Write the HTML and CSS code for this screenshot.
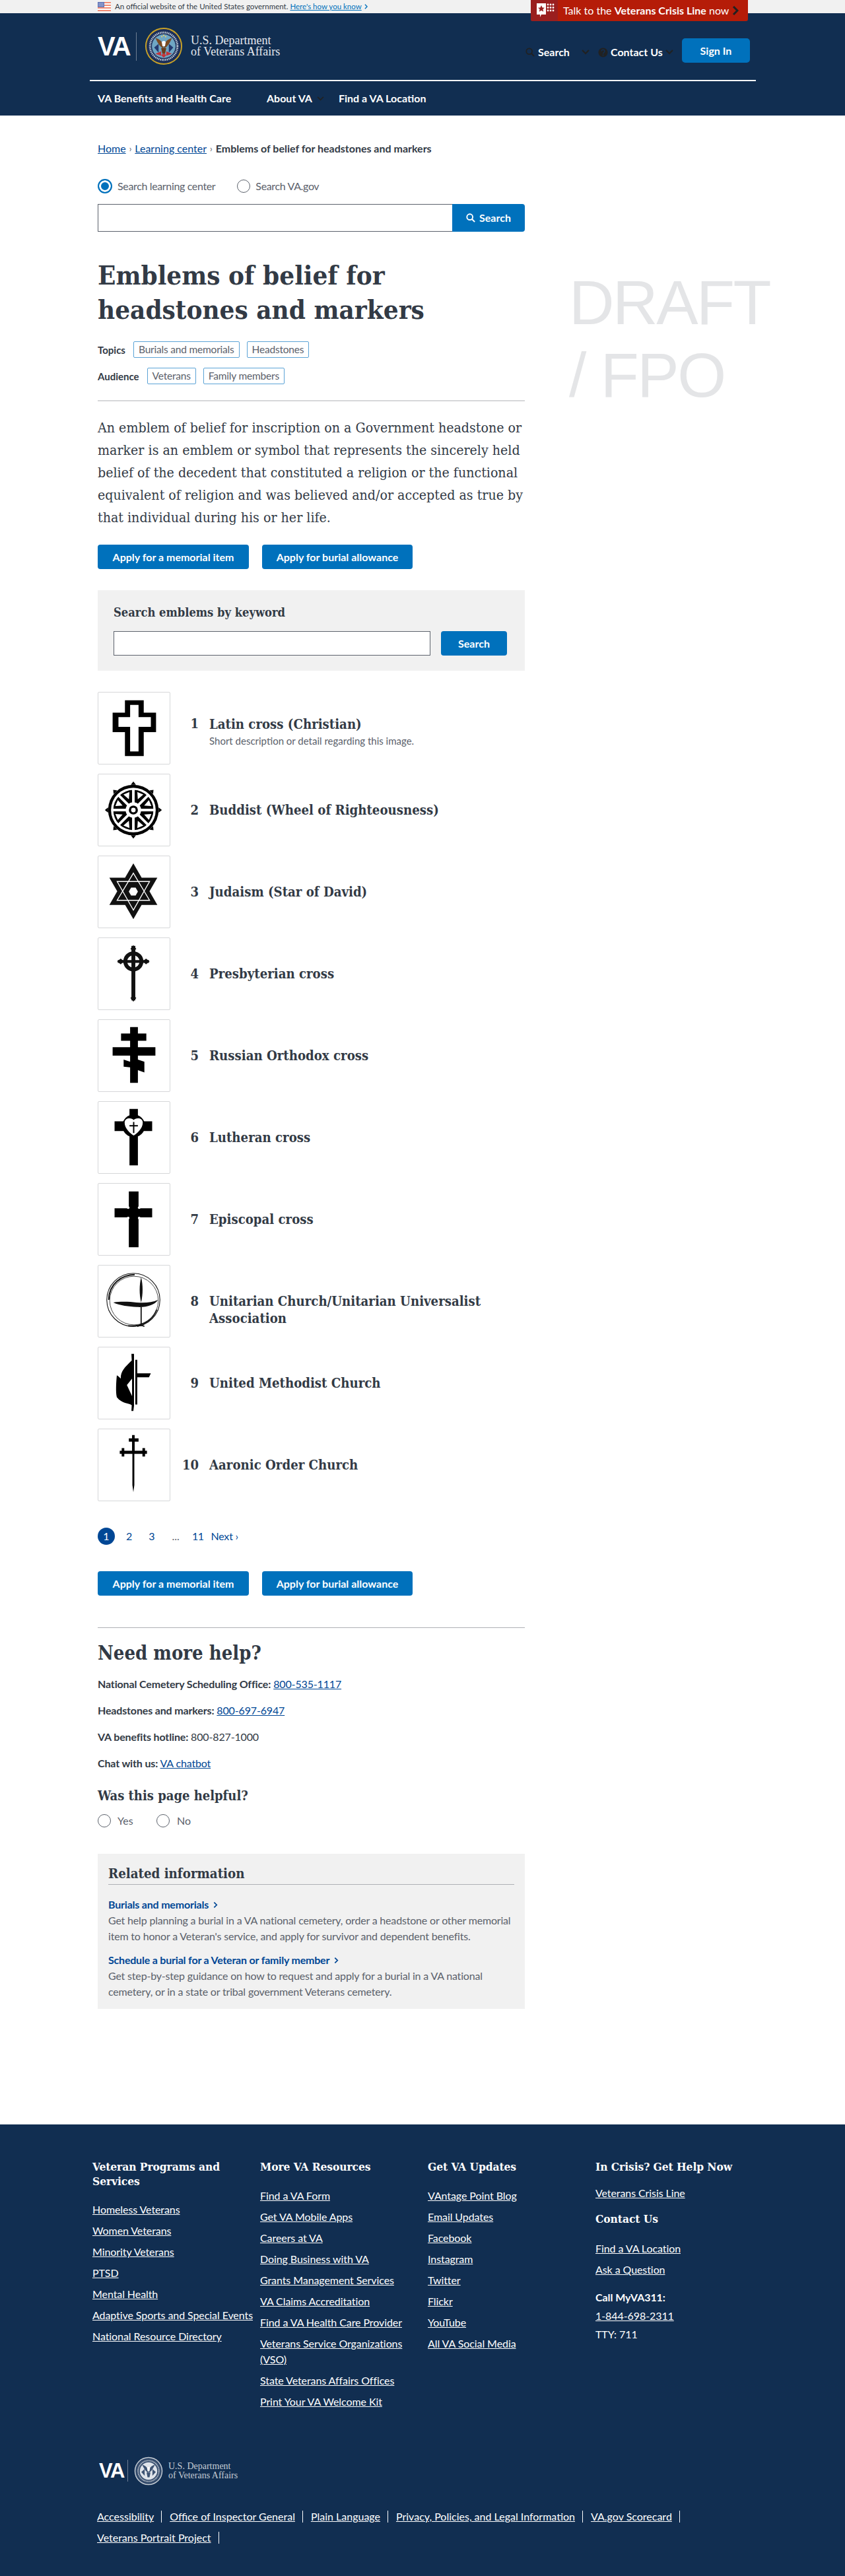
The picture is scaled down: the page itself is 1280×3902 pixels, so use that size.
FILE: index.html
```html
<!DOCTYPE html>
<html lang="en">
<head>
<meta charset="utf-8">
<title>Emblems of belief for headstones and markers</title>
<link rel="stylesheet" href="styles.css">
</head>
<body>
<div class="official">
  <svg class="flag" viewBox="0 0 20 14"><rect width="20" height="14" fill="#fff"/><path d="M0 1h20M0 5h20M0 9h20M0 13h20" stroke="#f28b74" stroke-width="2"/><rect width="10" height="8" fill="#5b6fb5"/><path d="M1.500 2h7M1.500 4h7M1.500 6h7" stroke="#fff" stroke-dasharray="1 1"/></svg>
  <span>An official website of the United States government.</span>
  <a href="#">Here's how you know</a><svg class="official-chev" viewBox="0 0 6 10"><path d="M1 1l4 4-4 4" fill="none" stroke="#0071bc" stroke-width="1.800"/></svg>
</div>
<a class="crisis" href="#">
  <span class="crisis-icon"><svg viewBox="0 0 30 30" width="30" height="30"><path d="M3 4h14v17h-7l-2 4v-4H3z" fill="#fff"/><path d="M10 7l1.600 3.500 3.400.3-2.600 2.300.8 3.600-3.200-1.900-3.200 1.900.8-3.600L5 10.800l3.400-.3z" fill="#9a1f1f"/><g fill="#fff"><circle cx="20" cy="6" r="1.400"/><circle cx="24" cy="6" r="1.400"/><circle cx="28" cy="6" r="1.400"/><circle cx="20" cy="10.500" r="1.400"/><circle cx="24" cy="10.500" r="1.400"/><circle cx="28" cy="10.500" r="1.400"/><circle cx="20" cy="15" r="1.400"/><circle cx="24" cy="15" r="1.400"/><circle cx="28" cy="15" r="1.400"/></g></svg></span>
  <span class="crisis-text">Talk to the <b>Veterans Crisis Line</b> now</span>
  <svg class="crisis-chev" viewBox="0 0 10 14"><path d="M2 1l6 6-6 6" fill="none" stroke="#212121" stroke-width="3"/></svg>
</a>
<header class="site-header">
  <div class="masthead">
    <div class="logo">
      <span class="logo-va">VA</span>
      <span class="logo-div"></span>
      <svg class="seal" viewBox="0 0 60 60"><circle cx="30" cy="30" r="29" fill="#c9a227"/><circle cx="30" cy="30" r="27" fill="#1c2f5a"/><circle cx="30" cy="30" r="21.500" fill="none" stroke="#c9d3df" stroke-width="3" stroke-dasharray="1.500 1.200"/><circle cx="30" cy="30" r="18.500" fill="#6fa6c4"/><path d="M15 32l7-6v14zM45 32l-7-6v14z" fill="#23396f"/><path d="M17 42l9-4v7zM43 42l-9-4v7z" fill="#c4333a"/><path d="M30 34c-6-3-10-10-13-17 4 1 8 3 11 8zM30 34c6-3 10-10 13-17-4 1-8 3-11 8z" fill="#7a4a22"/><path d="M27 24c0-3 6-3 6 0l-1 6h-4z" fill="#fff"/><path d="M26 33h8l-2 9h-4z" fill="#6b3d1c"/><path d="M26 44l4-3 4 3-4 4z" fill="#c4333a"/><circle cx="27" cy="15" r="1.100" fill="#f0d060"/><circle cx="33" cy="15" r="1.100" fill="#f0d060"/><circle cx="30" cy="13" r="1.100" fill="#f0d060"/></svg>
      <span class="logo-text">U.S. Department<br>of Veterans Affairs</span>
    </div>
    <div class="tools">
      <span class="tool tool-search"><svg class="tool-icon" viewBox="0 0 16 16"><circle cx="6.500" cy="6.500" r="5" fill="none" stroke="#212121" stroke-width="2"/><path d="M10 10l5 5" stroke="#212121" stroke-width="2.200"/></svg><b>Search</b><svg class="tool-chev" viewBox="0 0 12 8"><path d="M1 1l5 5 5-5" fill="none" stroke="#212121" stroke-width="2.200"/></svg></span>
      <span class="tool tool-contact"><svg class="tool-icon" viewBox="0 0 16 16"><circle cx="8" cy="8" r="7.500" fill="#212121"/><path d="M5.500 6a2.500 2.500 0 1 1 3.800 2.100C8.400 8.700 8 9.100 8 10" fill="none" stroke="#112e51" stroke-width="1.700"/><circle cx="8" cy="12.300" r="1" fill="#112e51"/></svg><b>Contact Us</b><svg class="tool-chev" viewBox="0 0 12 8"><path d="M1 1l5 5 5-5" fill="none" stroke="#212121" stroke-width="2.200"/></svg></span>
      <a class="signin" href="#">Sign In</a>
    </div>
  </div>
  <nav class="main-nav">
    <a href="#" class="nav-benefits">VA Benefits and Health Care</a>
    <a href="#" class="nav-about">About VA</a>
    <svg class="nav-chev" viewBox="0 0 12 8"><path d="M1 1l5 5 5-5" fill="none" stroke="#212121" stroke-width="2"/></svg>
    <a href="#" class="nav-find">Find a VA Location</a>
  </nav>
</header>
<div class="page">
<main class="content">
  <nav class="crumbs"><a href="#">Home</a><i>›</i><a href="#">Learning center</a><i>›</i><b>Emblems of belief for headstones and markers</b></nav>
  <div class="scope">
    <span class="radio radio-on"></span><span class="scope-label">Search learning center</span>
    <span class="radio scope-second"></span><span class="scope-label">Search VA.gov</span>
  </div>
  <div class="searchbar">
    <span class="searchbar-input"></span>
    <a class="searchbar-btn" href="#"><svg viewBox="0 0 16 16" width="14" height="14"><circle cx="6.500" cy="6.500" r="5" fill="none" stroke="#fff" stroke-width="2.200"/><path d="M10 10l5 5" stroke="#fff" stroke-width="2.400"/></svg>Search</a>
  </div>
  <h1>Emblems of belief for headstones and markers</h1>
  <div class="tags tags-first"><b>Topics</b><span class="tag">Burials and memorials</span><span class="tag">Headstones</span></div>
  <div class="tags tags-second"><b>Audience</b><span class="tag">Veterans</span><span class="tag">Family members</span></div>
  <hr class="rule-light">
  <p class="intro">An emblem of belief for inscription on a Government headstone or marker is an emblem or symbol that represents the sincerely held belief of the decedent that constituted a religion or the functional equivalent of religion and was believed and/or accepted as true by that individual during his or her life.</p>
  <div class="actions actions-top"><a class="btn btn-memorial" href="#">Apply for a memorial item</a><a class="btn btn-burial" href="#">Apply for burial allowance</a></div>
  <section class="keyword">
    <h2>Search emblems by keyword</h2>
    <div class="keyword-row"><span class="keyword-input"></span><a class="keyword-btn" href="#">Search</a></div>
  </section>
  <ol class="emblems">
    <li class="emblem">
      <span class="thumb"><svg viewBox="0 0 110 110"><path fill-rule="evenodd" d="M41 12H70V31H89V61H70V98H41V61H22V31H41ZM49 19V38H31V53H49V91H62V53H81V38H62V19Z"/></svg></span>
      <span class="num num-first">1</span>
      <div class="emblem-body"><h3>Latin cross (Christian)</h3><p>Short description or detail regarding this image.</p></div>
    </li>
    <li class="emblem">
      <span class="thumb"><svg viewBox="0 0 110 110"><g><path d="M54 11l4 5h-8z"/><path d="M54 11l4 5h-8z" transform="rotate(45 54 55)"/><path d="M54 11l4 5h-8z" transform="rotate(90 54 55)"/><path d="M54 11l4 5h-8z" transform="rotate(135 54 55)"/><path d="M54 11l4 5h-8z" transform="rotate(180 54 55)"/><path d="M54 11l4 5h-8z" transform="rotate(225 54 55)"/><path d="M54 11l4 5h-8z" transform="rotate(270 54 55)"/><path d="M54 11l4 5h-8z" transform="rotate(315 54 55)"/></g><circle cx="54" cy="55" r="39"/><circle cx="54" cy="55" r="34.500" fill="#fff"/><circle cx="54" cy="55" r="31"/><g stroke="#fff" stroke-width="4"><path d="M54 22v66M21 55h66M30.700 31.700l46.600 46.600M77.300 31.700L30.700 78.300"/></g><g fill="#fff"><path d="M49 27h10l-5 10z" transform="rotate(22.500 54 55)"/><path d="M49 27h10l-5 10z" transform="rotate(67.500 54 55)"/><path d="M49 27h10l-5 10z" transform="rotate(112.500 54 55)"/><path d="M49 27h10l-5 10z" transform="rotate(157.500 54 55)"/><path d="M49 27h10l-5 10z" transform="rotate(202.500 54 55)"/><path d="M49 27h10l-5 10z" transform="rotate(247.500 54 55)"/><path d="M49 27h10l-5 10z" transform="rotate(292.500 54 55)"/><path d="M49 27h10l-5 10z" transform="rotate(337.500 54 55)"/></g><circle cx="54" cy="55" r="12" fill="#fff"/><circle cx="54" cy="55" r="7"/><circle cx="54" cy="55" r="3.500" fill="#fff"/></svg></span>
      <span class="num">2</span>
      <div class="emblem-body"><h3>Buddist (Wheel of Righteousness)</h3></div>
    </li>
    <li class="emblem">
      <span class="thumb"><svg viewBox="0 0 110 110"><path d="M54 11L91 75H17ZM54 97L17 33H91Z" fill="#111"/><path d="M54 26L79 68H29ZM54 83L29 39H79Z" fill="none" stroke="#fff" stroke-width="1.400"/><path d="M47 54.500l3.500-6h7l3.500 6-3.500 6h-7z" fill="#fff"/></svg></span>
      <span class="num">3</span>
      <div class="emblem-body"><h3>Judaism (Star of David)</h3></div>
    </li>
    <li class="emblem">
      <span class="thumb"><svg viewBox="0 0 110 110"><rect x="51" y="12" width="6" height="84" fill="#111"/><circle cx="54" cy="36" r="12.500" fill="none" stroke="#111" stroke-width="6"/><path d="M30 36h48" stroke="#111" stroke-width="4.500"/><path d="M54 11l4.500 5.500-4.500 5-4.500-5zM29 36l5.500-4.500 5 4.500-5 4.500zM79 36l-5.500-4.500-5 4.500 5 4.500zM54 98l4.500-5.500-4.500-5-4.500 5z" fill="#111"/></svg></span>
      <span class="num">4</span>
      <div class="emblem-body"><h3>Presbyterian cross</h3></div>
    </li>
    <li class="emblem">
      <span class="thumb"><svg viewBox="0 0 110 110"><path d="M49 11h12v10h13v11H61v10h27v13H61v6l10 3.500V81L61 77.500V97H49V73l-10-1V61l10 3.500V55H22V42h27V32H35V21h14z"/></svg></span>
      <span class="num">5</span>
      <div class="emblem-body"><h3>Russian Orthodox cross</h3></div>
    </li>
    <li class="emblem">
      <span class="thumb"><svg viewBox="0 0 110 110"><path d="M48 11h13v19h22v15H61v53H48V45H25V30h23z"/><circle cx="54.500" cy="37" r="17.500"/><path d="M54.500 28c3-4 14-4 14 4 0 9-9 17-14 20-5-3-14-11-14-20 0-8 11-8 14-4z" fill="#fff"/><path d="M53.500 31h2v17h-2zM48 36h13v2H48z"/></svg></span>
      <span class="num">6</span>
      <div class="emblem-body"><h3>Lutheran cross</h3></div>
    </li>
    <li class="emblem">
      <span class="thumb"><svg viewBox="0 0 110 110"><path d="M47 12h15v26h21v14H62v46H47V52H25V38h22z"/><g fill="#fff"><circle cx="46" cy="37" r="2"/><circle cx="63" cy="37" r="2"/><circle cx="46" cy="53" r="2"/><circle cx="63" cy="53" r="2"/></g></svg></span>
      <span class="num">7</span>
      <div class="emblem-body"><h3>Episcopal cross</h3></div>
    </li>
    <li class="emblem">
      <span class="thumb"><svg viewBox="0 0 110 110"><circle cx="54" cy="53" r="41" fill="none" stroke="#111" stroke-width="1.100"/><path d="M16 53c0-24 20-39 40-39M90 68c-6 16-22 27-44 25" fill="none" stroke="#111" stroke-width="2"/><circle cx="55" cy="54" r="37.500" fill="none" stroke="#333" stroke-width=".9"/><path d="M66 18c-3 12-3 26 0 39 3-13 3-27 0-39zM23 57c12-2 26-1 36 0 13 1 24 0 33-4-5 8-18 12-33 11-12-1-25-2-36-7z" fill="#111"/><path d="M66 64v29M60 94c4-2 8-2 11 0" stroke="#111" stroke-width="1.800" fill="none"/></svg></span>
      <span class="num">8</span>
      <div class="emblem-body"><h3 class="title-wrapped">Unitarian Church/Unitarian Universalist Association</h3></div>
    </li>
    <li class="emblem">
      <span class="thumb"><svg viewBox="0 0 110 110"><path d="M51 10h4v80l-1 8h-3l.5-9c-5-3-15-2-23-12-2-8-1-24 0-34l3 2 3 3c0-12 6-17 17-28z"/><path d="M44 58l8-10v27z" fill="#fff"/><path d="M57 19h3v21h21l-3 6H60v42h-3z"/></svg></span>
      <span class="num">9</span>
      <div class="emblem-body"><h3>United Methodist Church</h3></div>
    </li>
    <li class="emblem">
      <span class="thumb"><svg viewBox="0 0 110 110"><path d="M52 9h4v27h-.5v50L54 97l-1.500-11V36H52z"/><path d="M47 14h15v5H47zM33 33h42v5H33zM36 29h4v13h-4zM68 29h4v13h-4z"/></svg></span>
      <span class="num">10</span>
      <div class="emblem-body"><h3>Aaronic Order Church</h3></div>
    </li>
  </ol>
  <nav class="pager"><span class="pager-on">1</span><a class="pg-2" href="#">2</a><a class="pg-3" href="#">3</a><span class="pg-dots">...</span><a class="pg-11" href="#">11</a><a class="pg-next" href="#">Next ›</a></nav>
  <div class="actions actions-bottom"><a class="btn btn-memorial" href="#">Apply for a memorial item</a><a class="btn btn-burial" href="#">Apply for burial allowance</a></div>
  <hr class="rule-dark">
  <h2 class="help-title">Need more help?</h2>
  <p class="help-line"><b>National Cemetery Scheduling Office:</b> <a href="#">800-535-1117</a></p>
  <p class="help-line"><b>Headstones and markers:</b> <a href="#">800-697-6947</a></p>
  <p class="help-line"><b>VA benefits hotline:</b> 800-827-1000</p>
  <p class="help-line"><b>Chat with us:</b> <a href="#">VA chatbot</a></p>
  <h3 class="helpful">Was this page helpful?</h3>
  <div class="helpful-row"><span class="radio"></span><span class="helpful-yes">Yes</span><span class="radio"></span><span class="helpful-no">No</span></div>
  <section class="related">
    <h2>Related information</h2>
    <a class="related-link" href="#">Burials and memorials<svg viewBox="0 0 8 12"><path d="M1.500 1.500L6 6l-4.500 4.500" fill="none" stroke="#004795" stroke-width="2"/></svg></a>
    <p>Get help planning a burial in a VA national cemetery, order a headstone or other memorial item to honor a Veteran's service, and apply for survivor and dependent benefits.</p>
    <a class="related-link" href="#">Schedule a burial for a Veteran or family member<svg viewBox="0 0 8 12"><path d="M1.500 1.500L6 6l-4.500 4.500" fill="none" stroke="#004795" stroke-width="2"/></svg></a>
    <p>Get step-by-step guidance on how to request and apply for a burial in a VA national cemetery, or in a state or tribal government Veterans cemetery.</p>
  </section>
</main>
<aside class="draft">DRAFT<br>/ FPO</aside>
</div>
<footer class="site-footer">
  <div class="foot-cols">
    <div class="foot-col col-programs">
      <h4>Veteran Programs and Services</h4>
      <ul><li><a href="#">Homeless Veterans</a></li><li><a href="#">Women Veterans</a></li><li><a href="#">Minority Veterans</a></li><li><a href="#">PTSD</a></li><li><a href="#">Mental Health</a></li><li><a href="#">Adaptive Sports and Special Events</a></li><li><a href="#">National Resource Directory</a></li></ul>
    </div>
    <div class="foot-col">
      <h4>More VA Resources</h4>
      <ul><li><a href="#">Find a VA Form</a></li><li><a href="#">Get VA Mobile Apps</a></li><li><a href="#">Careers at VA</a></li><li><a href="#">Doing Business with VA</a></li><li><a href="#">Grants Management Services</a></li><li><a href="#">VA Claims Accreditation</a></li><li><a href="#">Find a VA Health Care Provider</a></li><li><a href="#">Veterans Service Organizations (VSO)</a></li><li><a href="#">State Veterans Affairs Offices</a></li><li><a href="#">Print Your VA Welcome Kit</a></li></ul>
    </div>
    <div class="foot-col">
      <h4>Get VA Updates</h4>
      <ul><li><a href="#">VAntage Point Blog</a></li><li><a href="#">Email Updates</a></li><li><a href="#">Facebook</a></li><li><a href="#">Instagram</a></li><li><a href="#">Twitter</a></li><li><a href="#">Flickr</a></li><li><a href="#">YouTube</a></li><li><a href="#">All VA Social Media</a></li></ul>
    </div>
    <div class="foot-col col-crisis">
      <h4>In Crisis? Get Help Now</h4>
      <a class="crisis-link" href="#">Veterans Crisis Line</a>
      <h4 class="contact-head">Contact Us</h4>
      <ul><li><a href="#">Find a VA Location</a></li><li><a href="#">Ask a Question</a></li></ul>
      <p class="call-head">Call MyVA311:</p>
      <p class="call-line"><a href="#">1-844-698-2311</a></p>
      <p class="call-line">TTY: 711</p>
    </div>
  </div>
  <div class="foot-logo">
    <span class="foot-va">VA</span>
    <span class="foot-div"></span>
    <svg class="foot-seal" viewBox="0 0 60 60"><circle cx="30" cy="30" r="29" fill="#c5ccd4"/><circle cx="30" cy="30" r="27" fill="#31496a"/><circle cx="30" cy="30" r="21.500" fill="none" stroke="#c5ccd4" stroke-width="3" stroke-dasharray="1.500 1.200"/><circle cx="30" cy="30" r="18" fill="#dfe4ea"/><path d="M30 34c-6-3-10-10-13-17 4 1 8 3 11 8zM30 34c6-3 10-10 13-17-4 1-8 3-11 8zM15 32l7-6v14zM45 32l-7-6v14zM26 33h8l-2 10h-4z" fill="#3d5372"/><path d="M27 24c0-3 6-3 6 0l-1 6h-4z" fill="#fff"/></svg>
    <span class="foot-text">U.S. Department<br>of Veterans Affairs</span>
  </div>
  <ul class="foot-links">
    <li><a href="#">Accessibility</a></li><li><a href="#">Office of Inspector General</a></li><li><a href="#">Plain Language</a></li><li><a href="#">Privacy, Policies, and Legal Information</a></li><li><a href="#">VA.gov Scorecard</a></li><li><a href="#">Veterans Portrait Project</a></li>
  </ul>
</footer>
</body>
</html>
```
FILE: styles.css
```css
* { box-sizing: border-box; }
html, body { margin: 0; padding: 0; }
body { font-family: "Lato", "Noto Sans", sans-serif; font-size: 16px; line-height: 24px; color: #323a45; background: #fff; position: relative; }
a { color: #004795; }
h1, h2, h3, h4, p, ul, ol { margin: 0; padding: 0; }
ul, ol { list-style: none; }

/* top banner */
.official { height: 20px; background: #f1f1f1; padding-left: 148px; display: flex; align-items: center; font-size: 11.500px; line-height: 20px; color: #323a45; }
.flag { width: 20px; height: 14px; margin-right: 6px; }
.official a { color: #0071bc; margin-left: 3px; line-height: 14px; }
.official-chev { width: 5px; height: 8px; margin-left: 4px; }

.crisis { position: absolute; left: 804px; top: 0; width: 329px; height: 32px; background: #b51c08; color: #fff; display: flex; align-items: center; text-decoration: none; border-radius: 0 0 3px 3px; z-index: 2; }
.crisis-icon { width: 41px; height: 32px; background: #9a1f1f; display: flex; align-items: center; justify-content: center; border-radius: 0 0 0 3px; }
.crisis-text { margin-left: 8px; font-size: 16px; }
.crisis-chev { width: 10px; height: 14px; margin-left: auto; margin-right: 14px; }

.site-header { height: 155px; background: #112e51; color: #fff; }
.masthead { width: 1009px; margin-left: 136px; height: 103px; border-bottom: 2px solid #fff; display: flex; padding-left: 12px; position: relative; }
.logo { display: flex; align-items: center; height: 100%; padding-bottom: 1px; }
.logo-va { font-family: "Liberation Sans", sans-serif; font-weight: 700; font-size: 40px; line-height: 44px; width: 48px; letter-spacing: -2px; }
.logo-div { width: 1px; height: 43px; background: #6d7d92; margin-left: 10px; }
.seal { width: 58px; height: 58px; margin-left: 12px; }
.logo-text { font-family: "Liberation Serif", serif; font-size: 18px; line-height: 17px; margin-left: 12px; color: #e4e8ee; }
.tools { margin-left: auto; display: flex; align-items: flex-start; }
.tool { display: flex; align-items: center; height: 24px; margin-top: 47px; }
.tool b { font-size: 16px; }
.tool-icon { width: 14px; height: 14px; }
.tool-chev { width: 12px; height: 8px; }
.tool-search { width: 110px; }
.tool-search .tool-icon { margin-right: 5px; }
.tool-search .tool-chev { margin-left: 18px; }
.tool-contact { width: 127px; }
.tool-contact .tool-icon { margin-right: 4px; width: 15px; height: 15px; }
.tool-contact .tool-chev { margin-left: 4px; }
.signin { margin-top: 38px; margin-right: 9px; width: 103px; height: 37px; background: #0071bc; border-radius: 5px; color: #fff; font-weight: 700; text-decoration: none; display: flex; align-items: center; justify-content: center; }
.main-nav { display: flex; align-items: center; height: 52px; padding-left: 148px; font-weight: 700; font-size: 16px; }
.main-nav a { color: #fff; text-decoration: none; }
.nav-benefits { width: 256px; }
.nav-chev { width: 11px; height: 7px; margin-left: 7px; margin-right: 22px; }

/* page */
.page { display: flex; padding-left: 148px; }
.content { width: 647px; padding-top: 38px; padding-bottom: 175px; }
.draft { margin-left: 67px; margin-top: 228px; font-family: "Liberation Sans", sans-serif; font-size: 95px; line-height: 110px; color: #e4e5e7; letter-spacing: -2.500px; white-space: nowrap; height: 240px; }

.crumbs { height: 24px; display: flex; align-items: center; font-size: 16px; white-space: nowrap; }
.crumbs i { font-style: normal; margin: 0 5px; color: #5b616b; font-size: 13px; }
.scope { margin-top: 33px; height: 24px; display: flex; align-items: center; color: #5b616b; letter-spacing: -.35px; }
.radio { display: inline-block; width: 20px; height: 20px; border: 1px solid #5b616b; border-radius: 50%; background: #fff; flex: none; }
.radio-on { width: 22px; height: 22px; border: 2px solid #0071bc; box-shadow: inset 0 0 0 3px #fff; background: #0071bc; }
.scope-label { margin-left: 8px; }
.scope-second { margin-left: 33px; }
.searchbar { margin-top: 15px; height: 42px; display: flex; }
.searchbar-input { flex: 1; border: 1px solid #5b616b; border-right: 0; background: #fff; }
.searchbar-btn { width: 110px; background: #0071bc; color: #fff; font-weight: 700; text-decoration: none; border-radius: 0 4px 4px 0; display: flex; align-items: center; justify-content: center; gap: 6px; }

h1 { margin-top: 40px; font-family: "DejaVu Serif Condensed", "DejaVu Serif", serif; font-stretch: condensed; font-weight: 700; font-size: 40px; line-height: 52px; color: #323a45; }
.tags { display: flex; align-items: center; height: 25px; font-size: 15px; }
.tags b { margin-right: 12px; }
.tags-first { margin-top: 22px; }
.tags-second { margin-top: 15px; }
.tag { height: 25px; line-height: 23px; border: 1px solid #5ba3d6; border-radius: 2px; padding: 0 7px; margin-right: 11px; font-size: 15.500px; letter-spacing: -.2px; color: #5b616b; }
.rule-light { margin: 24px 0 0; border: 0; height: 2px; background: #d6d7d9; }
.intro { margin-top: 23px; font-family: "DejaVu Serif Condensed", "DejaVu Serif", serif; font-stretch: condensed; font-size: 21.200px; line-height: 34px; color: #323a45; }
.actions { display: flex; gap: 20px; }
.actions-top { margin-top: 24px; }
.actions-bottom { margin-top: 40px; }
.btn { height: 37px; background: #0071bc; color: #fff; font-weight: 700; font-size: 16px; text-decoration: none; border-radius: 4px; display: flex; align-items: center; justify-content: center; }
.btn-memorial { width: 229px; }
.btn-burial { width: 228px; }

.keyword { margin-top: 32px; height: 122px; background: #f1f1f1; padding: 22px 27px 0 24px; }
.keyword h2 { font-family: "DejaVu Serif Condensed", "DejaVu Serif", serif; font-stretch: condensed; font-weight: 700; font-size: 18.200px; line-height: 24px; color: #323a45; }
.keyword-row { margin-top: 16px; display: flex; gap: 16px; height: 37px; }
.keyword-input { flex: 1; border: 1px solid #5b616b; background: #fff; }
.keyword-btn { width: 100px; background: #0071bc; color: #fff; font-weight: 700; text-decoration: none; border-radius: 4px; display: flex; align-items: center; justify-content: center; }

.emblems { margin-top: 32px; display: flex; flex-direction: column; gap: 14px; }
.emblem { display: flex; align-items: center; height: 110px; }
.thumb { width: 110px; height: 110px; border: 1px solid #d6d7d9; border-radius: 2px; flex: none; display: block; }
.thumb svg { display: block; width: 108px; height: 108px; }
.num { width: 43px; text-align: right; flex: none; font-family: "DejaVu Serif Condensed", "DejaVu Serif", serif; font-stretch: condensed; font-weight: 700; font-size: 20px; color: #323a45; }
.num-first { margin-bottom: 14px; }
.emblem-body { margin-left: 16px; flex: 1; }
.emblem-body h3 { font-family: "DejaVu Serif Condensed", "DejaVu Serif", serif; font-stretch: condensed; font-weight: 700; font-size: 20.200px; line-height: 26px; color: #323a45; }
.emblem-body h3.title-wrapped { margin-bottom: -26px; }
.emblem-body p { font-size: 15px; line-height: 24px; color: #5b616b; margin-bottom: -12px; }

.pager { margin-top: 40px; height: 26px; display: flex; align-items: center; position: relative; }
.pager a { text-decoration: none; color: #004795; }
.pager-on { width: 26px; height: 26px; border-radius: 50%; background: #004795; color: #fff; display: flex; align-items: center; justify-content: center; }
.pg-2 { margin-left: 17px; }
.pg-3 { margin-left: 25px; }
.pg-dots { margin-left: 26px; color: #5b616b; }
.pg-11 { margin-left: 19px; letter-spacing: -.5px; }
.pg-next { margin-left: 11px; letter-spacing: -.2px; }

.rule-dark { margin: 48px 0 0; border: 0; height: 1px; background: #aeb0b5; }
.help-title { margin-top: 18px; font-family: "DejaVu Serif Condensed", "DejaVu Serif", serif; font-stretch: condensed; font-weight: 700; font-size: 29px; line-height: 40px; color: #323a45; }
.help-line { margin-top: 16px; height: 24px; letter-spacing: -.15px; }
.help-title + .help-line { margin-top: 15px; }
.helpful { margin-top: 22px; font-family: "DejaVu Serif Condensed", "DejaVu Serif", serif; font-stretch: condensed; font-weight: 700; font-size: 20px; line-height: 30px; color: #323a45; }
.helpful-row { margin-top: 11px; height: 24px; display: flex; align-items: center; color: #5b616b; }
.helpful-yes { margin-left: 10px; width: 59px; }
.helpful-no { margin-left: 11px; }

.related { margin-top: 38px; height: 235px; background: #f1f1f1; padding: 18px 16px 0; }
.related h2 { font-family: "DejaVu Serif Condensed", "DejaVu Serif", serif; font-stretch: condensed; font-weight: 700; font-size: 20.300px; line-height: 24px; height: 29px; border-bottom: 1px solid #aeb0b5; color: #323a45; }
.related-link { display: block; margin-top: 18px; height: 24px; font-weight: 700; text-decoration: none; letter-spacing: -.2px; }
.related-link svg { width: 7px; height: 11px; margin-left: 7px; }
.related p + .related-link { margin-top: 12px; }
.related p { line-height: 24px; color: #5b616b; letter-spacing: -.18px; }

/* footer */
.site-footer { background: #112e51; color: #fff; padding: 53px 0 48px 140px; height: 685px; }
.site-footer a { color: #fff; }
.foot-cols { display: grid; grid-template-columns: repeat(4, 254px); height: 449px; letter-spacing: -.08px; }
.foot-col { padding-right: 20px; }
.foot-col h4 { font-family: "DejaVu Serif Condensed", "DejaVu Serif", serif; font-stretch: condensed; font-weight: 700; font-size: 17.300px; line-height: 22px; }
.foot-col ul { margin-top: 21px; display: flex; flex-direction: column; gap: 8px; }
.col-programs ul { margin-top: 20px; }
.col-programs { padding-right: 0; }
.crisis-link { display: block; margin-top: 17px; }
.col-crisis h4.contact-head { margin-top: 16px; }
.col-crisis ul { margin-top: 22px; }
.call-head { font-weight: 700; margin-top: 18px; }
.call-line { margin-top: 4px; }
.foot-logo { margin-left: 10px; display: flex; align-items: center; height: 45px; }
.foot-va { font-family: "Liberation Sans", sans-serif; font-weight: 700; font-size: 31px; width: 35px; letter-spacing: -1.500px; }
.foot-div { width: 1px; height: 33px; background: #6d7d92; margin-left: 8px; }
.foot-seal { width: 44px; height: 44px; margin-left: 9px; }
.foot-text { font-family: "Liberation Serif", serif; font-size: 14px; line-height: 14px; margin-left: 8px; color: #c5ccd4; }
.foot-links { margin: 35px 0 0 7px; width: 1000px; display: flex; flex-wrap: wrap; row-gap: 8px; }
.foot-links li { display: flex; height: 24px; align-items: center; padding-right: 12px; margin-right: 12px; position: relative; }
.foot-links li::after { content: ""; position: absolute; right: 0; top: 3px; width: 1px; height: 18px; background: #fff; }
```
